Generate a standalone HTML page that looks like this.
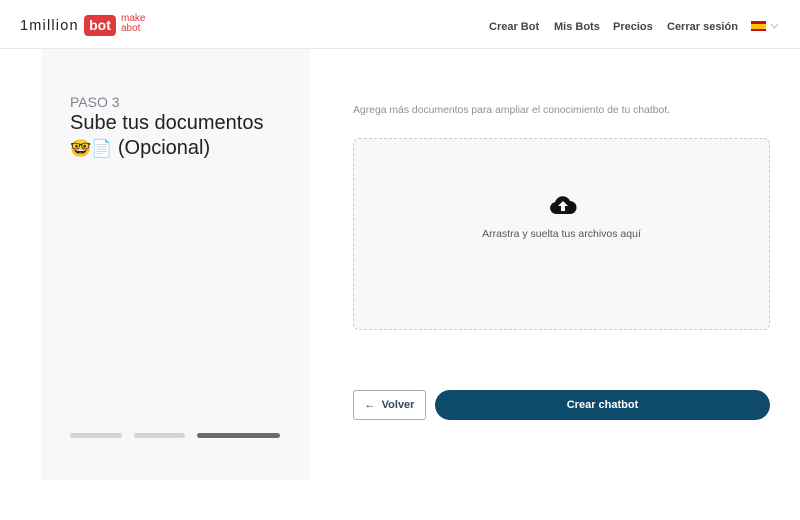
<!DOCTYPE html>
<html><head><meta charset="utf-8"><style>
*{margin:0;padding:0;box-sizing:border-box}
body{width:800px;height:520px;background:#fff;font-family:"Liberation Sans",sans-serif;position:relative;overflow:hidden}
.hdr{position:absolute;left:0;top:0;width:800px;height:49px;border-bottom:1px solid #e8e8e8}
.logo{position:absolute;left:20px;top:18px;font-size:14.5px;letter-spacing:1.2px;color:#222}
.bot{position:absolute;left:84px;top:15px;width:32px;height:21px;background:#e0393e;border-radius:4px;color:#fff;font-weight:bold;font-size:14px;text-align:center;line-height:21px}
.mk{position:absolute;left:121px;top:14px;color:#e0393e;font-size:10px;line-height:10px}
.nav{position:absolute;top:21px;font-size:11px;color:#444;font-weight:bold}
.left{position:absolute;left:41px;top:49px;width:269px;height:431px;background:#f8f8f8}
.paso{position:absolute;left:70px;top:94px;font-size:14px;color:#7a8494}
.ttl{position:absolute;left:70px;top:111px;font-size:20px;color:#222;line-height:25px}
.bar{position:absolute;top:433px;height:5px;border-radius:3px}
.desc{position:absolute;left:353px;top:105px;font-size:10.4px;color:#8a9199}
.drop{position:absolute;left:353px;top:138px;width:417px;height:192px;border:1.5px dashed #ccc;border-radius:6px;background:#f8f8f8}
.dt{position:absolute;left:0;width:100%;top:89px;text-align:center;font-size:10.5px;color:#555}
.back{position:absolute;left:353px;top:390px;width:73px;height:30px;border:1px solid #aab;border-radius:3px;font-size:11px;font-weight:bold;color:#34495e;text-align:center;line-height:28px}
.create{position:absolute;left:435px;top:390px;width:335px;height:30px;background:#0d4a6b;border-radius:15px;color:#fff;font-size:11px;font-weight:bold;text-align:center;line-height:30px}
</style></head><body>
<div class="hdr">
<div class="logo">1million</div><div class="bot">bot</div><div class="mk">make<br>abot</div>
<div class="nav" style="left:489px">Crear Bot</div>
<div class="nav" style="left:554px">Mis Bots</div>
<div class="nav" style="left:613px">Precios</div>
<div class="nav" style="left:667px">Cerrar sesión</div>
<div style="position:absolute;left:751px;top:21px;width:15px;height:10px;background:#c60b1e"><div style="margin-top:2.5px;height:5px;background:#ffc400"></div></div>
<svg style="position:absolute;left:770px;top:23px" width="9" height="6" viewBox="0 0 9 6"><path d="M1 1l3.5 4L8 1" fill="none" stroke="#bbb" stroke-width="1"/></svg>
</div>
<div class="left"></div>
<div class="paso">PASO 3</div>
<div class="ttl">Sube tus documentos<br><span style="font-family:'Noto Color Emoji',sans-serif;font-size:17px">🤓📄</span> (Opcional)</div>
<div class="bar" style="left:70px;width:52px;background:#d4d4d4"></div>
<div class="bar" style="left:134px;width:51px;background:#d4d4d4"></div>
<div class="bar" style="left:197px;width:83px;background:#6b6b6b"></div>
<div class="desc">Agrega más documentos para ampliar el conocimiento de tu chatbot.</div>
<div class="drop">
<svg style="position:absolute;left:195px;top:56px" width="28" height="20" viewBox="0 0 28 20"><path d="M7 19a6 6 0 0 1-1-11.9A8 8 0 0 1 21 6a6.5 6.5 0 0 1 0 13z" fill="#111"/><path d="M14 6l-5 5h3v5h4v-5h3z" fill="#fff"/></svg>
<div class="dt">Arrastra y suelta tus archivos aquí</div>
</div>
<div class="back">←&nbsp;&nbsp;Volver</div>
<div class="create">Crear chatbot</div>
</body></html>
